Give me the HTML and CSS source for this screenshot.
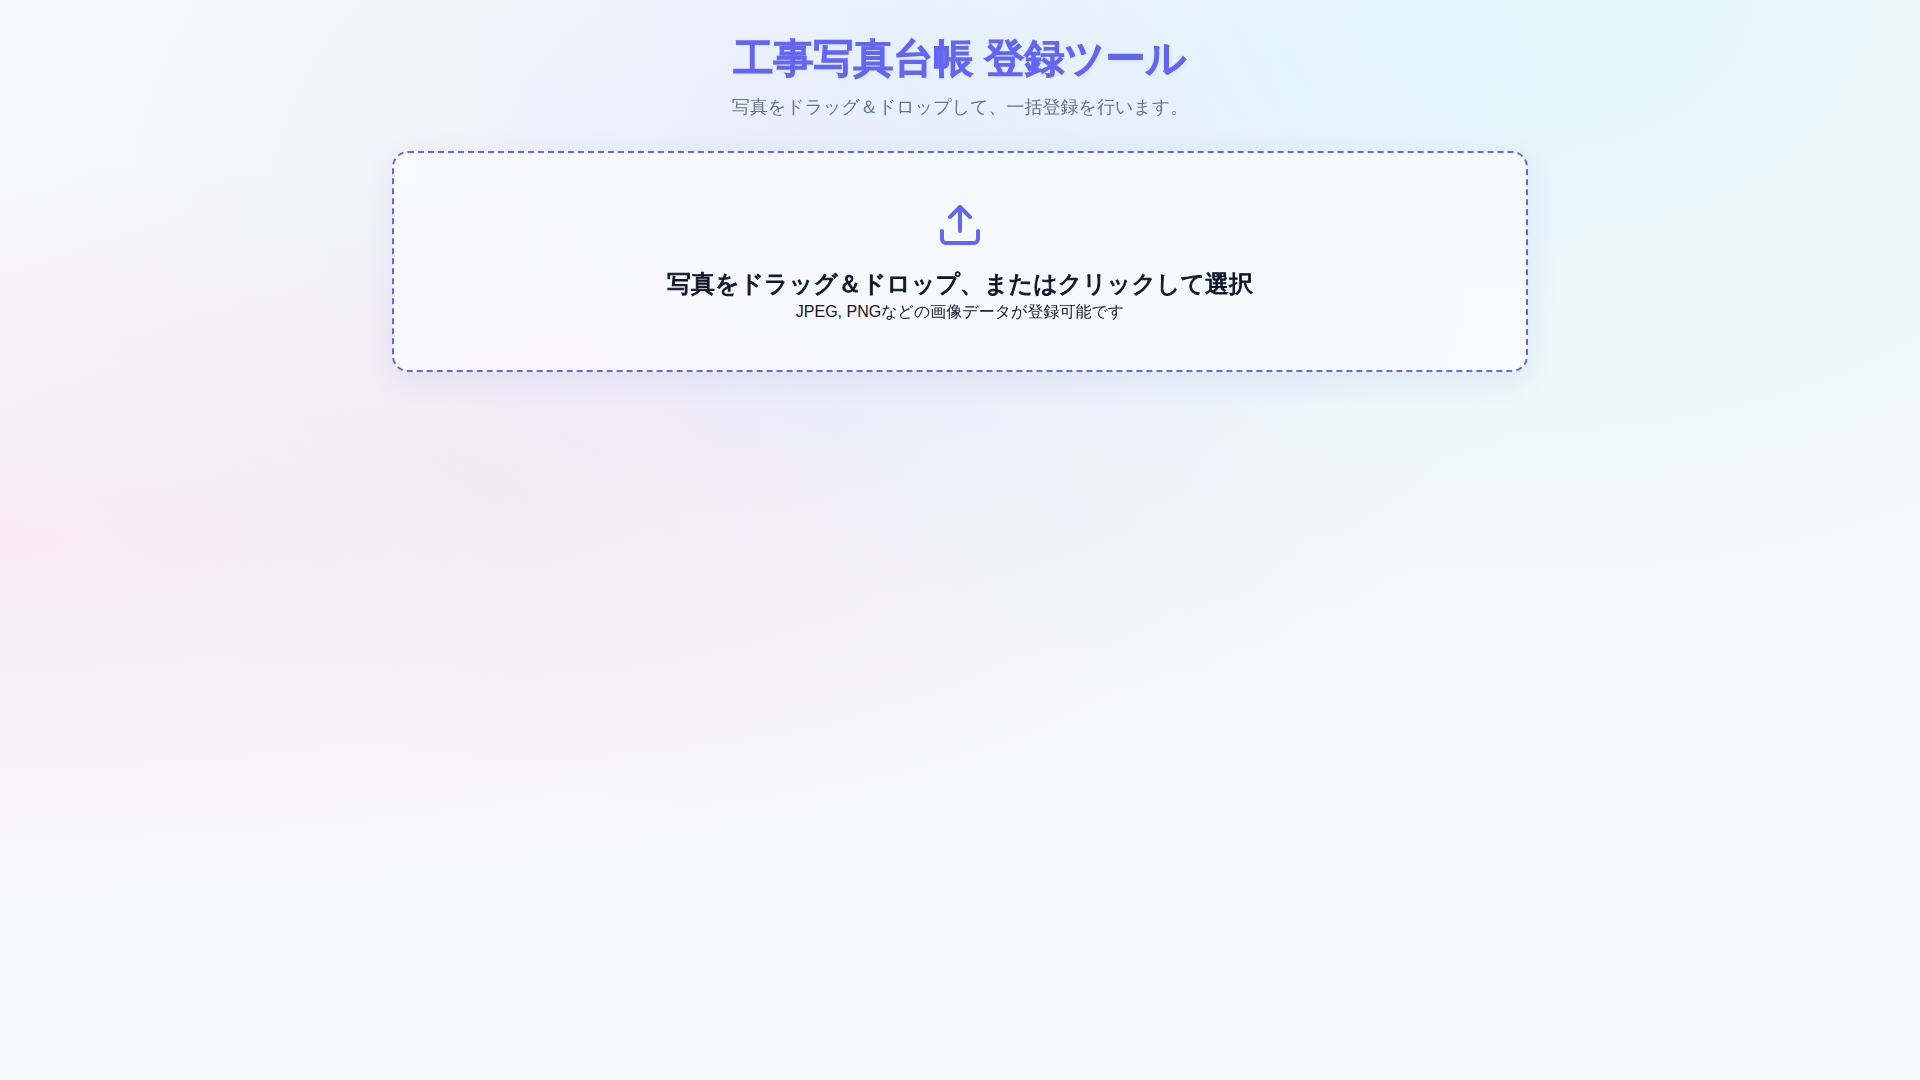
FILE: index.html
```
<!DOCTYPE html>
<html lang="ja">
<head>
    <meta charset="UTF-8">
    <meta name="viewport" content="width=device-width, initial-scale=1.0">
    <title>工事写真台帳 登録ツール</title>
    <link rel="stylesheet" href="styles.css">
</head>
<body>
    <div class="container">
        <header class="header">
            <h1>工事写真台帳 登録ツール</h1>
            <p>写真をドラッグ＆ドロップして、一括登録を行います。</p>
        </header>

        <label class="drop-zone" for="file-input">
            <svg class="upload-icon" viewBox="0 0 24 24" fill="none" stroke="currentColor" stroke-width="2" stroke-linecap="round" stroke-linejoin="round" aria-hidden="true">
                <path d="M21 15v4a2 2 0 0 1-2 2H5a2 2 0 0 1-2-2v-4"></path>
                <polyline points="17 8 12 3 7 8"></polyline>
                <line x1="12" y1="3" x2="12" y2="15"></line>
            </svg>
            <span class="drop-title">写真をドラッグ＆ドロップ、またはクリックして選択</span>
            <span class="drop-note">JPEG, PNGなどの画像データが登録可能です</span>
            <input type="file" id="file-input" class="file-input" accept="image/*" multiple>
        </label>
    </div>
</body>
</html>
```
FILE: styles.css
```
:root {
    --primary: #6366f1;
    --text-main: #0f172a;
    --text-muted: #64748b;
}

* {
    box-sizing: border-box;
    margin: 0;
    padding: 0;
}

body {
    font-family: "Liberation Sans", "WenQuanYi Zen Hei", "Noto Sans CJK JP", sans-serif;
    color: var(--text-main);
    background-color: #f8fafc;
    background-image:
        radial-gradient(at 40% 20%, rgba(99, 102, 241, 0.08) 0px, transparent 50%),
        radial-gradient(at 80% 0%, rgba(34, 211, 238, 0.1) 0px, transparent 50%),
        radial-gradient(at 0% 50%, rgba(236, 72, 153, 0.09) 0px, transparent 50%);
    min-height: 100vh;
    padding: 32px;
}

.container {
    max-width: 1136px;
    margin: 0 auto;
}

.header {
    text-align: center;
    margin-bottom: 30px;
}

.header h1 {
    font-size: 40px;
    line-height: 52px;
    color: var(--primary);
    margin-bottom: 10px;
    -webkit-text-stroke: 2px currentColor;
    text-shadow: 2px 2px 4px rgba(0, 0, 0, 0.05);
}

.header p {
    font-size: 18px;
    line-height: 27px;
    color: var(--text-muted);
}

.drop-zone {
    display: flex;
    flex-direction: column;
    align-items: center;
    padding: 48px;
    text-align: center;
    background: rgba(255, 255, 255, 0.6);
    border: 2px dashed var(--primary);
    border-radius: 16px;
    box-shadow: 0 8px 32px rgba(31, 38, 135, 0.07);
    cursor: pointer;
}

.upload-icon {
    width: 48px;
    height: 48px;
    color: var(--primary);
    margin-bottom: 16px;
}

.drop-title {
    font-size: 24px;
    line-height: 37px;
    font-weight: bold;
    -webkit-text-stroke: 1px currentColor;
}

.drop-note {
    font-size: 16px;
    line-height: 20px;
}

.file-input {
    display: none;
}
```
